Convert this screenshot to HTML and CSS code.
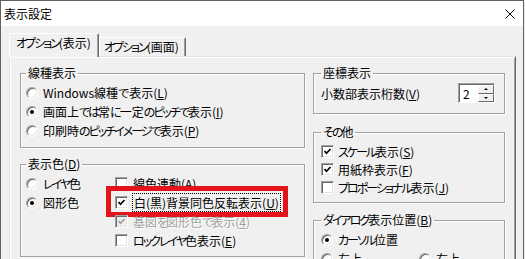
FILE: index.html
```html
<!DOCTYPE html>
<html lang="ja">
<head>
<meta charset="UTF-8">
<title>表示設定</title>
<link rel="stylesheet" href="styles.css">
</head>
<body>

<div class="window">
    <div class="titlebar">
        <span class="title">表示設定</span>
        <svg class="close" width="10" height="10" viewBox="0 0 10 10"><path d="M0.5 0.5 L9.5 9.5 M9.5 0.5 L0.5 9.5" stroke="#000" stroke-width="1" fill="none"/></svg>
    </div>

    <div class="dialog">
        <div class="tabs">
            <div class="tab active"><span class="k">オプション</span>(表示)</div>
            <div class="tab"><span class="k">オプション</span>(画面)</div>
        </div>

        <div class="panel">
            <div class="col">
                <fieldset class="group g-line">
                    <legend>線種表示</legend>
                    <label class="row"><span class="radio"></span><span>Windows線種で表示(<u>L</u>)</span></label>
                    <label class="row"><span class="radio on"></span><span>画面上<span class="k">では</span>常<span class="k">に</span>一定<span class="k">のピッチで</span>表示(<u>I</u>)</span></label>
                    <label class="row"><span class="radio"></span><span>印刷時<span class="k">のピッチイメージで</span>表示(<u>P</u>)</span></label>
                </fieldset>

                <fieldset class="group g-color">
                    <legend>表示色(<u>D</u>)</legend>
                    <div class="color-grid">
                        <div class="stack">
                            <label class="row"><span class="radio"></span><span><span class="k">レイヤ</span>色</span></label>
                            <label class="row"><span class="radio on"></span><span>図形色</span></label>
                        </div>
                        <div class="stack">
                            <label class="row"><span class="check"></span><span>線色連動(<u>A</u>)</span></label>
                            <label class="row hl"><span class="check on"><svg viewBox="0 0 9 9"><path d="M1.5 4 L3.5 6.3 L7.5 2"/></svg></span><span class="focus">白(黒)背景同色反転表示(<u>U</u>)</span></label>
                            <label class="row disabled"><span class="check on"><svg viewBox="0 0 9 9"><path d="M1.5 4 L3.5 6.3 L7.5 2"/></svg></span><span>基図<span class="k">を</span>図形色<span class="k">で</span>表示(<u>4</u>)</span></label>
                            <label class="row"><span class="check"></span><span><span class="k">ロックレイヤ</span>色表示(<u>E</u>)</span></label>
                        </div>
                    </div>
                </fieldset>
            </div>

            <div class="col">
                <fieldset class="group g-coord">
                    <legend>座標表示</legend>
                    <div class="row spread">
                        <span>小数部表示桁数(<u>V</u>)</span>
                        <div class="spin">
                            <span class="spin-val">2</span>
                            <span class="spin-btns"><span class="up"></span><span class="down"></span></span>
                        </div>
                    </div>
                </fieldset>

                <fieldset class="group g-other">
                    <legend><span class="k">その</span>他</legend>
                    <label class="row"><span class="check on"><svg viewBox="0 0 9 9"><path d="M1.5 4 L3.5 6.3 L7.5 2"/></svg></span><span><span class="k">スケール</span>表示(<u>S</u>)</span></label>
                    <label class="row"><span class="check on"><svg viewBox="0 0 9 9"><path d="M1.5 4 L3.5 6.3 L7.5 2"/></svg></span><span>用紙枠表示(<u>F</u>)</span></label>
                    <label class="row"><span class="check"></span><span><span class="k">プロポーショナル</span>表示(<u>J</u>)</span></label>
                </fieldset>

                <fieldset class="group g-pos">
                    <legend><span class="k">ダイアログ</span>表示位置(<u>B</u>)</legend>
                    <label class="row"><span class="radio on"></span><span><span class="k">カーソル</span>位置</span></label>
                    <div class="pair">
                        <label class="row first"><span class="radio"></span><span>左上</span></label>
                        <label class="row"><span class="radio"></span><span>右上</span></label>
                    </div>
                </fieldset>
            </div>
        </div>
    </div>
</div>

</body>
</html>
```

FILE: styles.css
```css
body {
    margin: 0;
    background-color: #f0f0f0;
    font-family: "Noto Sans CJK JP", "Noto Sans", sans-serif;
    font-size: 12px;
    font-feature-settings: "palt";
    color: #000;
}
/* kana runs are narrower in the original UI font */
.k {
    letter-spacing: -2px;
}
.window {
    width: 524px;
    height: 259px;
    box-sizing: border-box;
    border: 1px solid #626262;
    border-bottom: none;
    overflow: hidden;
}
.titlebar {
    height: 25px;
    background-color: #fff;
    display: flex;
    align-items: center;
    justify-content: space-between;
    padding: 0 8px 0 3px;
}
.title {
    line-height: 16px;
}
.dialog {
    padding: 7px 7px 0 8px;
}

/* tabs */
.tabs {
    display: flex;
    align-items: flex-end;
    height: 23px;
}
.tab {
    box-sizing: border-box;
    height: 19px;
    padding: 0 6px 0 4px;
    line-height: 18px;
    border: 1px solid;
    border-color: #fff #696969 transparent #fff;
    border-bottom: none;
    border-radius: 2px 2px 0 0;
    box-shadow: inset -1px 0 0 #a0a0a0;
    background-color: #f0f0f0;
}
.tab.active {
    height: 24px;
    margin-bottom: -1px;
    padding: 0 7px 0 6px;
    z-index: 1;
}

.panel {
    box-sizing: border-box;
    height: 240px;
    border: 1px solid;
    border-color: #e3e3e3 #696969 #696969 #e3e3e3;
    box-shadow: inset 1px 1px 0 #fff, inset -1px -1px 0 #a0a0a0;
    padding: 8px 10px 0;
    display: grid;
    grid-template-columns: 285px 192px;
    column-gap: 8px;
    align-items: start;
}

/* group boxes */
.group {
    margin: 0;
    min-width: 0;
    border: 1px solid #a0a0a0;
    box-shadow: inset 1px 1px 0 #fff, 1px 1px 0 #fff;
    padding: 2px 6px 7px 5px;
}
.group legend {
    padding: 0 2px;
    line-height: 16px;
}
.g-color {
    margin-top: 8px;
    padding-bottom: 6px;
}
.g-coord {
    padding: 2px 9px 10px 7px;
}
.g-other {
    margin-top: 10px;
    padding: 2px 6px 6px 7px;
}
.g-other .row {
    height: 18px;
    gap: 4px;
}
.g-pos {
    margin-top: 9px;
    padding: 2px 6px 6px 7px;
}

.row {
    display: flex;
    align-items: center;
    gap: 5px;
    height: 19px;
    white-space: nowrap;
}
.row u {
    text-decoration: underline;
    text-underline-offset: 1px;
}
.spread {
    justify-content: space-between;
    height: 20px;
}
.color-grid {
    display: grid;
    grid-template-columns: 89px auto;
}
.stack {
    display: flex;
    flex-direction: column;
    align-items: flex-start;
}
.pair {
    display: flex;
}
.pair .first {
    width: 98px;
}

/* highlighted row */
.row.hl {
    margin: -2px -3px 0 -4px;
    padding: 2px 3px 0 4px;
    outline: 5px solid #e3141c;
}
.focus {
    outline: 1px dotted #000;
    outline-offset: 0;
    padding: 0 1px;
    line-height: 17px;
}
.row.disabled {
    color: #a0a0a0;
    text-shadow: 1px 1px 0 #fff;
}

/* radio buttons */
.radio {
    flex: none;
    width: 12px;
    height: 12px;
    box-sizing: border-box;
    border-radius: 50%;
    background-color: #fff;
    border: 1px solid;
    border-color: #a0a0a0 #fff #fff #a0a0a0;
    box-shadow: inset 1px 1px 0 #696969, inset -1px -1px 0 #e3e3e3;
    display: grid;
    place-items: center;
}
.radio.on::after {
    content: "";
    width: 4px;
    height: 4px;
    border-radius: 50%;
    background-color: #000;
}

/* check boxes */
.check {
    flex: none;
    width: 13px;
    height: 13px;
    box-sizing: border-box;
    background-color: #fff;
    border: 1px solid;
    border-color: #a0a0a0 #fff #fff #a0a0a0;
    box-shadow: inset 1px 1px 0 #696969, inset -1px -1px 0 #e3e3e3;
    display: grid;
    place-items: center;
}
.check svg {
    width: 9px;
    height: 9px;
}
.check path {
    fill: none;
    stroke: #000;
    stroke-width: 1.7;
}
.disabled .check {
    background-color: #f0f0f0;
}
.disabled .check path {
    stroke: #a0a0a0;
}

/* spin box */
.spin {
    display: flex;
    width: 37px;
    height: 20px;
    box-sizing: border-box;
    border: 1px solid;
    border-color: #a0a0a0 #fff #fff #a0a0a0;
    box-shadow: inset 1px 1px 0 #696969;
    background-color: #fff;
    padding: 1px 0 0 1px;
}
.spin-val {
    flex: 1;
    padding-left: 3px;
    line-height: 17px;
}
.spin-btns {
    width: 16px;
    display: flex;
    flex-direction: column;
}
.spin-btns span {
    flex: 1;
    box-sizing: border-box;
    background-color: #f0f0f0;
    border: 1px solid;
    border-color: #fff #696969 #696969 #fff;
    display: grid;
    place-items: center;
}
.spin-btns .up::after {
    content: "";
    border: 2px solid transparent;
    border-top: none;
    border-bottom: 2px solid #000;
}
.spin-btns .down::after {
    content: "";
    border: 2px solid transparent;
    border-bottom: none;
    border-top: 2px solid #000;
}
```
